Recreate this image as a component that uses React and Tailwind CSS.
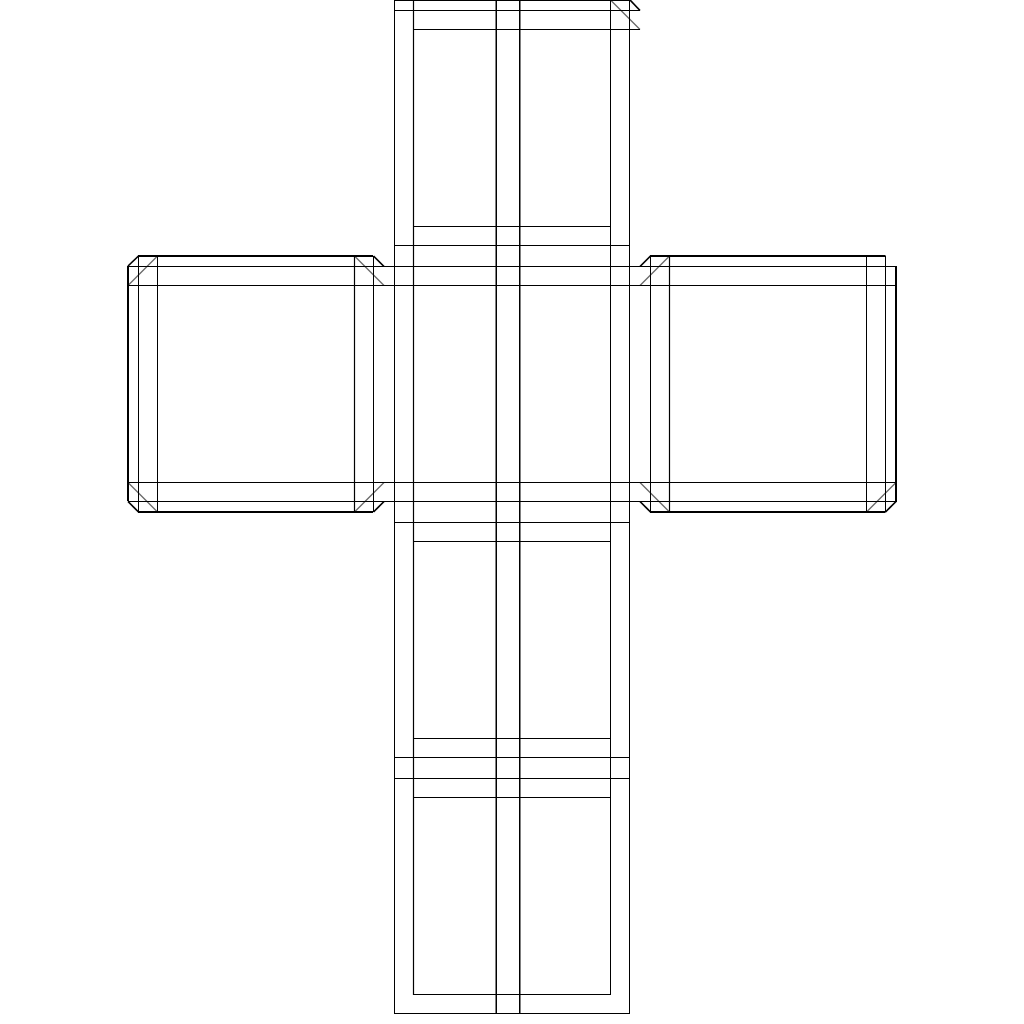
const h = [
  // [y, x1, x2]
  [0.5, 394, 630],
  [10.5, 394, 640],
  [29.5, 413, 640],
  [226.5, 413, 611],
  [245.5, 394, 630],
  [266.5, 128, 897],
  [285.5, 128, 897],
  [482.5, 128, 897],
  [501.5, 128, 897],
  [522.5, 394, 630],
  [541.5, 413, 611],
  [738.5, 413, 611],
  [757.5, 394, 630],
  [778.5, 394, 630],
  [797.5, 413, 611],
  [994.5, 413, 611],
  [1013.5, 394, 630],
];
const v = [
  // [x, y1, y2, width]
  [394.5, 0, 1014, 1],
  [413.5, 0, 995, 1.2],
  [496.25, 0, 1014, 1.5],
  [519.75, 0, 1014, 1.5],
  [610.5, 0, 995, 1],
  [629.5, 0, 1014, 1],
  [138.5, 256, 512, 1],
  [157.5, 256, 512, 1],
  [354.5, 256, 512, 1.2],
  [373.5, 256, 512, 1],
  [650.5, 256, 512, 1],
  [669.5, 256, 512, 1.2],
  [866.5, 256, 512, 1],
  [885.5, 256, 512, 1],
];
const thick = [
  "M128 266V501",
  "M138 256H373",
  "M138 512H373",
  "M650 256H885.5",
  "M650 512H885.5",
  "M896 266V501",
];
const black = [
  "M630 0L640 10.5",
  "M128 266L138.5 256",
  "M373.5 256L384 266.5",
  "M640 266.5L650.5 256",
  "M128 501.5L138.5 512",
  "M384 501.5L373.5 512",
  "M640 501.5L650.5 512",
  "M896 501.5L885.5 512",
];
const gray = [
  "M610.5 0L640 29.5",
  "M128 285.5L157.5 256",
  "M354.5 256L384 285.5",
  "M640 285.5L669.5 256",
  "M128 482.5L157.5 512",
  "M384 482.5L354.5 512",
  "M640 482.5L669.5 512",
  "M896 482.5L866.5 512",
];

export default function App() {
  return (
    <div className="w-[1024px] h-[1024px] bg-white overflow-hidden">
      <svg width="1024" height="1024" viewBox="0 0 1024 1024" fill="none" stroke="#000" className="block">
        {gray.map((d, i) => (
          <path key={i} d={d} strokeWidth="1.3" stroke="#666" />
        ))}
        {h.map(([y, a, b], i) => (
          <line key={i} x1={a} x2={b} y1={y} y2={y} strokeWidth="1" />
        ))}
        {v.map(([x, a, b, w], i) => (
          <line key={i} x1={x} x2={x} y1={a} y2={b} strokeWidth={w} />
        ))}
        {thick.map((d, i) => (
          <path key={i} d={d} strokeWidth="2" />
        ))}
        {black.map((d, i) => (
          <path key={i} d={d} strokeWidth="1.7" />
        ))}
      </svg>
    </div>
  );
}
